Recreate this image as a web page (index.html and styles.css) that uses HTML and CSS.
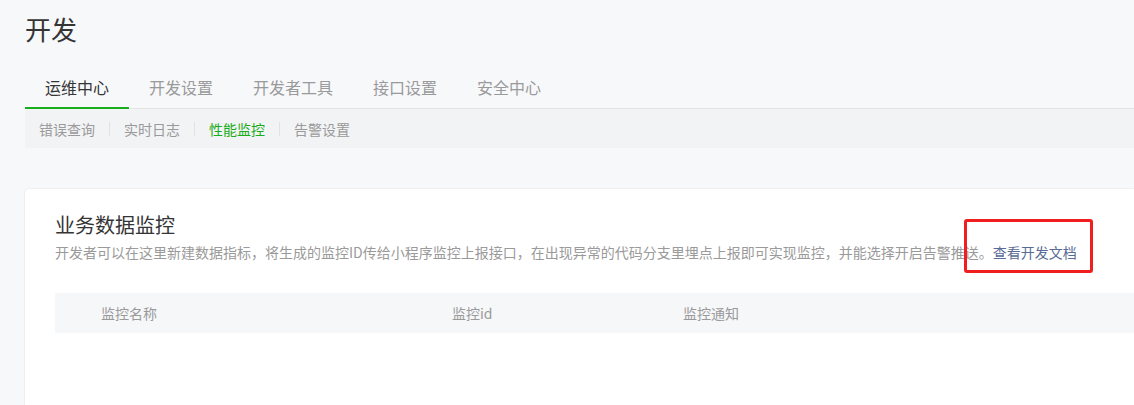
FILE: index.html
```html
<!DOCTYPE html>
<html lang="zh-CN">
<head>
<meta charset="utf-8">
<title>开发</title>
<link rel="stylesheet" href="styles.css">
</head>
<body>
<div class="page">
  <h1 class="page-title">开发</h1>
  <nav class="tabs">
    <a class="tab tab-active">运维中心</a>
    <a class="tab">开发设置</a>
    <a class="tab">开发者工具</a>
    <a class="tab">接口设置</a>
    <a class="tab">安全中心</a>
  </nav>
  <nav class="subnav">
    <a class="sub-item">错误查询</a>
    <a class="sub-item">实时日志</a>
    <a class="sub-item sub-active">性能监控</a>
    <a class="sub-item">告警设置</a>
  </nav>
  <section class="card">
    <h2 class="card-title">业务数据监控</h2>
    <p class="card-desc">开发者可以在这里新建数据指标，将生成的监控ID传给小程序监控上报接口，在出现异常的代码分支里埋点上报即可实现监控，并能选择开启告警推送。<a class="doc-link">查看开发文档</a></p>
    <div class="highlight"></div>
    <div class="table-head">
      <div class="th">监控名称</div>
      <div class="th">监控id</div>
      <div class="th">监控通知</div>
    </div>
  </section>
</div>
</body>
</html>
```
FILE: styles.css
```css
html, body {
  margin: 0;
  padding: 0;
  background: #f7f8fa;
  overflow: hidden;
}
body {
  font-family: "Noto Sans CJK SC", "Noto Sans", sans-serif;
  color: #353535;
}
.page {
  box-sizing: border-box;
  width: 100%;
  height: 405px;
  padding: 11px 0 0 25px;
  display: flex;
  flex-direction: column;
}
.page-title {
  margin: 0;
  font-size: 26px;
  line-height: 36px;
  font-weight: 400;
  color: #353535;
}
.tabs {
  display: flex;
  margin-top: 28px;
  border-bottom: 1px solid #e3e4e6;
}
.tab {
  padding: 0 20px 8px;
  font-size: 16px;
  line-height: 24px;
  color: #9a9a9a;
  border-bottom: 2px solid transparent;
  margin-bottom: -1px;
}
.tab-active {
  color: #353535;
  border-bottom-color: #1aad19;
}
.subnav {
  display: flex;
  align-items: center;
  height: 39px;
  background: #f2f3f5;
}
.sub-item {
  padding: 0 14px;
  font-size: 14px;
  line-height: 14px;
  color: #9a9a9a;
}
.sub-item + .sub-item {
  border-left: 1px solid #e1e2e4;
}
.sub-active {
  color: #1aad19;
}
.card {
  position: relative;
  flex: 1;
  margin-top: 41px;
  padding: 22px 0 0 30px;
  background: #ffffff;
  border-radius: 4px 0 0 0;
  box-shadow: -1px 0 1px rgba(0, 0, 0, 0.04), 0 -1px 1px rgba(0, 0, 0, 0.03);
  overflow: hidden;
}
.card-title {
  margin: 0;
  font-size: 20px;
  line-height: 28px;
  font-weight: 400;
  color: #353535;
}
.card-desc {
  margin: 3px 0 0;
  font-size: 14px;
  line-height: 20px;
  color: #9a9a9a;
  white-space: nowrap;
}
.doc-link {
  color: #576b95;
}
.highlight {
  position: absolute;
  left: 939px;
  top: 30px;
  width: 123px;
  height: 48px;
  border: 3px solid #f01e1e;
  border-radius: 3px;
}
.table-head {
  display: grid;
  grid-template-columns: 351px 231px 1fr;
  margin-top: 31px;
  height: 40px;
  align-items: center;
  background: #f6f7f9;
}
.th {
  padding-left: 46px;
  font-size: 14px;
  line-height: 20px;
  color: #9a9a9a;
}
```
